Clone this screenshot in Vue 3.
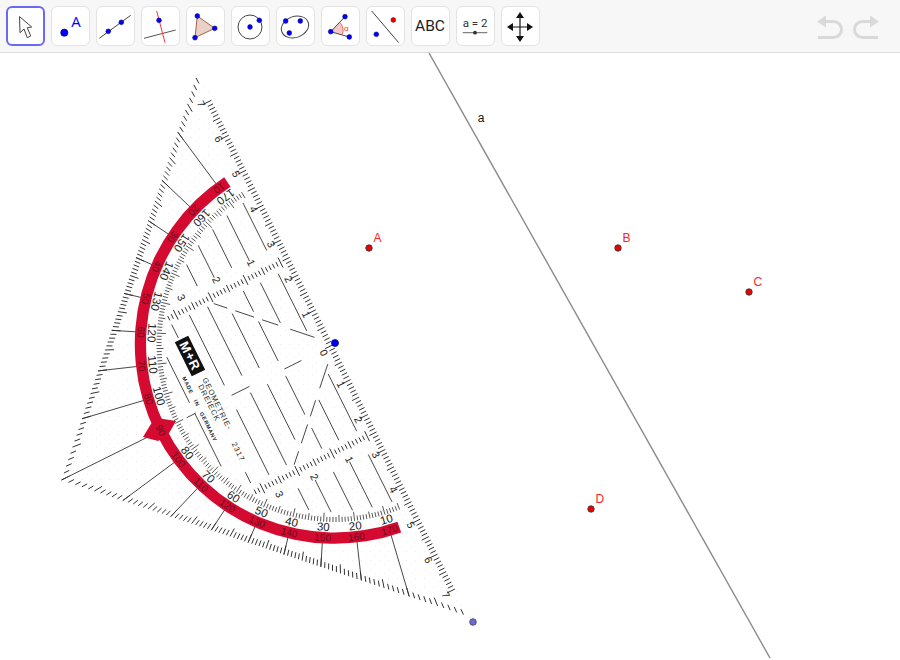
<template>
  <div class="app">
    <div class="toolbar">
      <button class="tool selected">
        <svg viewBox="0 0 39 39"><path d="M13.5 9.6 14 25.7 18 22 21.3 30.7 24.7 29 21.3 20.7 25.7 20Z" fill="#fff" stroke="#444" stroke-width="1"/></svg>
      </button>
      <button class="tool">
        <svg viewBox="0 0 39 39">
          <circle cx="13.3" cy="25.7" r="3.6" fill="#00f" stroke="#00006a" stroke-width=".7"/>
          <text x="25" y="20" class="icon-letter">A</text>
        </svg>
      </button>
      <button class="tool">
        <svg viewBox="0 0 39 39">
          <path d="M3.3 31.3 34.7 8.3" stroke="#444" stroke-width="1"/>
          <circle cx="12.3" cy="24.3" r="2.4" class="dot"/>
          <circle cx="25.3" cy="15.3" r="2.4" class="dot"/>
        </svg>
      </button>
      <button class="tool">
        <svg viewBox="0 0 39 39">
          <path d="M3 31.3 34.7 23" stroke="#555" stroke-width="1"/>
          <path d="M15.7 4 24 35.7" stroke="#f33" stroke-width="1"/>
          <circle cx="18" cy="13.3" r="2.4" class="dot"/>
        </svg>
      </button>
      <button class="tool">
        <svg viewBox="0 0 39 39">
          <path d="M11.3 9 28.7 21.3 9 30.7Z" fill="#e8d2c8" stroke="#a8613f" stroke-width="1"/>
          <circle cx="11.3" cy="9" r="2.4" class="dot"/>
          <circle cx="28.7" cy="21.3" r="2.4" class="dot"/>
          <circle cx="9" cy="30.7" r="2.4" class="dot"/>
        </svg>
      </button>
      <button class="tool">
        <svg viewBox="0 0 39 39">
          <circle cx="19" cy="20" r="12" fill="none" stroke="#444" stroke-width="1"/>
          <circle cx="19" cy="20" r="2.4" class="dot"/>
          <circle cx="28.3" cy="13.3" r="2.4" class="dot"/>
        </svg>
      </button>
      <button class="tool">
        <svg viewBox="0 0 39 39">
          <ellipse cx="19" cy="20" rx="14" ry="10.5" transform="rotate(-20 19 20)" fill="none" stroke="#444" stroke-width="1"/>
          <circle cx="9.7" cy="14" r="2.4" class="dot"/>
          <circle cx="13.3" cy="26" r="2.4" class="dot"/>
          <circle cx="24.3" cy="14" r="2.4" class="dot"/>
        </svg>
      </button>
      <button class="tool">
        <svg viewBox="0 0 39 39">
          <path d="M9.7 24.7 19 15.5A13 13 0 0 1 21.5 27.4Z" fill="#f7c6c6"/>
          <path d="M24 9.7 9.7 24.7 28.3 30" fill="none" stroke="#444" stroke-width="1"/>
          <path d="M19 15.5A13 13 0 0 1 21.5 27.4" fill="none" stroke="#e66" stroke-width="1"/>
          <circle cx="9.7" cy="24.7" r="2.4" class="dot"/>
          <circle cx="24" cy="9.7" r="2.4" class="dot"/>
          <circle cx="28.3" cy="30" r="2.4" class="dot"/>
          <text x="23" y="23.5" class="icon-alpha">α</text>
        </svg>
      </button>
      <button class="tool">
        <svg viewBox="0 0 39 39">
          <path d="M5.7 4 32.7 35.7" stroke="#444" stroke-width="1"/>
          <circle cx="27.3" cy="13" r="2.4" fill="#e00" stroke="#600" stroke-width=".5"/>
          <circle cx="10.3" cy="27.3" r="2.4" class="dot"/>
        </svg>
      </button>
      <button class="tool abc">ABC</button>
      <button class="tool">
        <svg viewBox="0 0 39 39">
          <text x="19" y="20" class="icon-slider">a = 2</text>
          <path d="M6.7 25.7H31.3" stroke="#666" stroke-width="1"/>
          <circle cx="19" cy="25.7" r="1.9" fill="#333"/>
        </svg>
      </button>
      <button class="tool">
        <svg viewBox="0 0 39 39">
          <path d="M19 11V29M10 20H28" stroke="#111" stroke-width="1.2"/>
          <path d="M19 5 23 11H15ZM19 35 23 29H15ZM6 20 12 16V24ZM32 20 26 16V24Z" fill="#111"/>
        </svg>
      </button>
      <div class="history">
        <svg viewBox="0 0 30 30" class="undo"><path d="M11 8.5H19.5A8 8 0 0 1 19.5 24.5H4" fill="none" stroke="#d9d9d9" stroke-width="3"/><path d="M3 8.5 12 2.5V14.5Z" fill="#d9d9d9"/></svg>
        <svg viewBox="0 0 30 30" class="redo"><path d="M19 8.5H10.5A8 8 0 0 0 10.5 24.5H26" fill="none" stroke="#d9d9d9" stroke-width="3"/><path d="M27 8.5 18 2.5V14.5Z" fill="#d9d9d9"/></svg>
      </div>
    </div>

    <div class="canvas">
      <svg class="board" viewBox="0 53 900 607">
        <defs>
          <pattern id="speckle" width="9" height="9" patternUnits="userSpaceOnUse">
            <rect x="1" y="2" width="1" height="1" fill="#ececec"/>
            <rect x="6" y="6" width="1" height="1" fill="#f2f2f2"/>
          </pattern>
        </defs>

        <line x1="429" y1="53" x2="770" y2="658" class="line-a"/>
        <text x="481" y="122" class="line-label">a</text>

        <!-- geodreieck -->
        <polygon :points="outline" fill="url(#speckle)"/>
        <path :d="radialLines" class="thin"/>
        <path :d="edgeTicks" class="ticks"/>
        <path :d="protractorTicks" class="ticks fine"/>
        <path :d="scaleTicks" class="ticks"/>
        <path :d="gridLines" class="thin"/>
        <path :d="dashes" class="thin"/>
        <path :d="bandPath" fill="#d40a30"/>
        <path d="M143 437 151 424 157 418 176 421 168 435 158 441Z" fill="#d40a30"/>

        <text v-for="l in innerLabels" :key="'i' + l.text" class="deg" :x="l.x" :y="l.y" :transform="l.transform">{{ l.text }}</text>
        <text v-for="l in bandLabels" :key="'b' + l.text" class="deg-band" :x="l.x" :y="l.y" :transform="l.transform">{{ l.text }}</text>
        <text v-for="l in cmLabels" :key="l.key" class="cm" :x="l.x" :y="l.y" :transform="l.transform">{{ l.text }}</text>

        <g transform="rotate(63.5 190 356)">
          <rect x="171" y="348.5" width="38" height="15" fill="#111"/>
          <text x="190" y="360.5" class="logo">M+R</text>
        </g>
        <text x="215" y="405" transform="rotate(63.5 215 405)" class="small">GEOMETRIE-</text>
        <text x="207" y="404" transform="rotate(63.5 207 404)" class="small">DREIECK</text>
        <text x="198" y="410" transform="rotate(63.5 198 410)" class="tiny">MADE IN GERMANY</text>
        <text x="236" y="453" transform="rotate(63.5 236 453)" class="small">2317</text>

        <!-- points -->
        <g v-for="p in points" :key="p.name">
          <circle :cx="p.x" :cy="p.y" r="3.2" class="free-point"/>
          <text :x="p.x + 4.5" :y="p.y - 6" class="point-label">{{ p.name }}</text>
        </g>
        <circle cx="335" cy="343" r="3.5" fill="#00f" stroke="#000a6a" stroke-width=".8"/>
        <circle cx="473" cy="622" r="3.3" fill="#6a6ae0" stroke="#444" stroke-width=".8"/>
      </svg>
    </div>
  </div>
</template>

<script setup>
const O = { x: 334.5, y: 344 };
const ux = 0.446, uy = 0.895;
const px = -0.895, py = 0.446;
const RAD = Math.PI / 180;

// a = along the long edge, b = towards the right angle
const pt = (a, b) => ({ x: O.x + a * ux + b * px, y: O.y + a * uy + b * py });
const seg = (a1, b1, a2, b2) => {
  const p = pt(a1, b1), q = pt(a2, b2);
  return `M${p.x.toFixed(1)} ${p.y.toFixed(1)}L${q.x.toFixed(1)} ${q.y.toFixed(1)}`;
};
const polar = (r, deg) => pt(r * Math.cos(deg * RAD), r * Math.sin(deg * RAD));
const fmt = (p) => `${p.x.toFixed(1)} ${p.y.toFixed(1)}`;

const corner = 305;
const outline = [pt(-305, 0), pt(0, corner), pt(305, 0)].map((p) => `${p.x},${p.y}`).join(' ');
const legRadius = (d) => corner / (Math.sin(d * RAD) + Math.abs(Math.cos(d * RAD)));

const tickLen = (i, a, b, c) => (i % 10 === 0 ? c : i % 5 === 0 ? b : a);

// lines out from the red arc to the two short edges
let radial = '';
for (let d = 10; d <= 170; d += 10) {
  radial += `M${fmt(polar(198, d))}L${fmt(polar(legRadius(d), d))}`;
}
const radialLines = radial;

let edge = '';
for (let i = -70; i <= 70; i++) {
  const a = i * 3.9;
  edge += seg(a, 1.5, a, 1.5 + tickLen(i, 6, 8, 9));
}
// degree marks on the short edges point at the centre
for (let d = 1; d <= 179; d++) {
  const r = legRadius(d);
  edge += `M${fmt(polar(r, d))}L${fmt(polar(r - tickLen(d, 6, 9, 9), d))}`;
}
const edgeTicks = edge;

let fine = '';
for (let d = 5; d <= 175; d++) {
  fine += `M${fmt(polar(178, d))}L${fmt(polar(178 - tickLen(d, 5, 7, 9), d))}`;
}
const protractorTicks = fine;

let scale = '';
for (let i = 0; i <= 32; i++) {
  const b = 12 + i * 3.9;
  const l = tickLen(i, 2.5, 4, 5.5);
  scale += seg(97 - l, b, 97 + l, b) + seg(-97 - l, b, -97 + l, b);
}
const scaleTicks = scale;

const grid = [
  [19, 24, 88], [19, 114, 167], [19, -88, -24], [19, -167, -114],
  [39, 43, 88], [39, 112, 163], [39, -88, -43], [39, -163, -112],
  [58, 7, 50], [58, 65, 88], [58, 114, 157], [58, -54, -10], [58, -88, -65], [58, -157, -114],
  [78, 6, 68], [78, 113, 149], [78, -73, -12], [78, -149, -113],
  [97, 6, 87], [97, 113, 137], [97, -90, -13], [97, -137, -113],
  [117, 15, 88], [117, -91, -12],
  [137, 75, 87], [137, -90, -75],
  [156, 0, 59], [156, -63, -12]
];
const gridLines = grid.map(([b, a1, a2]) => seg(a1, b, a2, b)).join('');

let dash = '';
[[15, 33], [42, 54], [60, 74], [80, 90]].forEach(([b1, b2]) => {
  dash += seg(b1, b1, b2, b2) + seg(-b1, b1, -b2, b2);
});
[[37, 56], [95, 115], [155, 165]].forEach(([b1, b2]) => {
  dash += seg(0, b1, 0, b2);
});
const dashes = dash;

const band = (r1, r2, d1, d2) => {
  const a = polar(r2, d1), b = polar(r2, d2), c = polar(r1, d2), e = polar(r1, d1);
  return `M${fmt(a)}A${r2} ${r2} 0 0 1 ${fmt(b)}L${fmt(c)}A${r1} ${r1} 0 0 0 ${fmt(e)}Z`;
};
const bandPath = band(188.5, 200, 7, 173);

const radialLabel = (text, r, d) => {
  const p = polar(r, d);
  const angle = Math.atan2(p.y - O.y, p.x - O.x) / RAD - 90;
  return { text, x: p.x, y: p.y + 3, transform: `rotate(${angle.toFixed(1)} ${p.x} ${p.y})` };
};

const innerLabels = [];
const bandLabels = [];
for (let d = 10; d <= 170; d += 10) {
  if (d !== 90) innerLabels.push(radialLabel(String(d), 184, d));
  bandLabels.push(radialLabel(String(180 - d), 194.5, d));
}

const cmLabels = [];
const addCm = (key, text, a, b, rot) => {
  const p = pt(a, b);
  cmLabels.push({ key, text, x: p.x, y: p.y + 3, transform: `rotate(${rot} ${p.x} ${p.y})` });
};
for (let k = 1; k <= 7; k++) {
  addCm(`u${k}`, k, -k * 39.2, 13, 63.5);
  addCm(`l${k}`, k, k * 39.2, 13, 63.5);
}
addCm('z', 0, 3, 14, 63.5);
for (let k = 1; k <= 3; k++) {
  addCm(`iu${k}`, k, -110, k * 39, 63.5);
  addCm(`il${k}`, k, 110, k * 39, 63.5);
}

const points = [
  { name: 'A', x: 369, y: 248 },
  { name: 'B', x: 618, y: 248 },
  { name: 'C', x: 749, y: 292 },
  { name: 'D', x: 591, y: 509 }
];
</script>

<style scoped>
.app {
  width: 900px; height: 660px; display: flex; flex-direction: column;
  background: #fff; font-family: "Liberation Sans", Arial, sans-serif;
}
.toolbar {
  height: 53px; box-sizing: border-box; flex-shrink: 0;
  display: flex; align-items: flex-start; gap: 6px;
  padding: 6px 18px 0 5.5px;
  background: #f7f7f7; border-bottom: 1px solid #dcdcdc;
}
.tool {
  width: 39px; height: 40px; padding: 0; box-sizing: border-box; flex-shrink: 0;
  background: #fff; border: 1px solid #e3e3e3; border-radius: 6px;
  display: flex; align-items: center; justify-content: center;
}
.tool svg { width: 39px; height: 39px; display: block; flex-shrink: 0; }
.tool.selected { border: 2px solid #6a6af0; }
.abc { font-family: Roboto, sans-serif; font-size: 15.5px; color: #222; }
.dot { fill: #00f; stroke: #00006a; stroke-width: .5; }
.icon-letter { fill: #00f; font-family: "Open Sans", sans-serif; font-size: 15px; text-anchor: middle; }
.icon-alpha { fill: #f33; font-family: "Liberation Sans", sans-serif; font-size: 8px; }
.icon-slider { fill: #333; font-family: Roboto, sans-serif; font-size: 11.5px; text-anchor: middle; }
.history { margin-left: auto; display: flex; gap: 8px; padding-top: 7px; }
.history svg { width: 30px; height: 30px; display: block; }

.canvas { flex: 1; min-height: 0; }
.board { width: 900px; height: 607px; display: block; }
.line-a { stroke: #8a8a8a; stroke-width: 1.4; }
.line-label { font-size: 12px; fill: #111; font-family: "Liberation Sans", sans-serif; text-anchor: middle; }
.thin { fill: none; stroke: #333; stroke-width: .9; }
.ticks { fill: none; stroke: #333; stroke-width: 1; }
.ticks.fine { stroke-width: .9; stroke: #444; }
.deg { font-size: 11.5px; fill: #222; text-anchor: middle; font-family: "Liberation Sans", sans-serif; }
.deg-band { font-size: 10px; fill: #6b0a1e; text-anchor: middle; font-family: "Liberation Sans", sans-serif; }
.cm { font-size: 10.5px; fill: #222; text-anchor: middle; font-family: "Liberation Sans", sans-serif; }
.logo { font-size: 13px; font-weight: 700; fill: #fff; text-anchor: middle; letter-spacing: 1px; font-family: "Liberation Sans", sans-serif; }
.small { font-size: 7.5px; fill: #222; text-anchor: middle; letter-spacing: 1px; font-family: "Liberation Sans", sans-serif; }
.tiny { font-size: 5.5px; font-weight: 700; fill: #222; text-anchor: middle; letter-spacing: .6px; word-spacing: 5px; font-family: "Liberation Sans", sans-serif; }
.free-point { fill: #f00000; stroke: #333; stroke-width: .9; }
.point-label { font-size: 12px; fill: #f22; font-family: "Liberation Sans", sans-serif; }
</style>
